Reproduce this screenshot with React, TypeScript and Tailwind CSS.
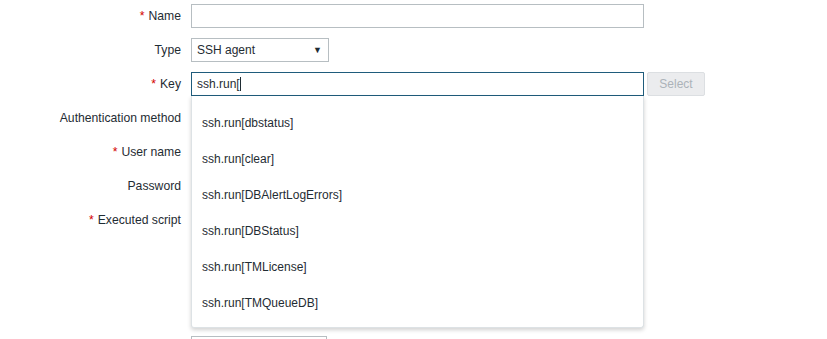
import React from "react";

const suggestions = [
  "ssh.run[dbstatus]",
  "ssh.run[clear]",
  "ssh.run[DBAlertLogErrors]",
  "ssh.run[DBStatus]",
  "ssh.run[TMLicense]",
  "ssh.run[TMQueueDB]",
];

const Label = ({ text, required }: { text: string; required?: boolean }) => (
  <div className="h-[24px] flex items-center justify-end whitespace-nowrap text-[12.2px]">
    {required && <span className="text-[#d40000] mr-[4px]">*</span>}
    {text}
  </div>
);

const App = () => {
  return (
    <div
      className="relative w-[827px] h-[339px] overflow-hidden bg-white text-[12px] text-[#1f2c33]"
      style={{ fontFamily: '"Liberation Sans", Arial, sans-serif' }}
    >
      <div className="grid grid-cols-[181px_auto] gap-x-[10px] gap-y-[10px] pt-[4px]">
        <Label text="Name" required />
        <div className="w-[453px] h-[24px] border border-[#b7bec2] bg-white" />

        <Label text="Type" />
        <div className="w-[138px] h-[24px] border border-[#b7bec2] bg-white flex items-center justify-between pl-[5px] pr-[6px]">
          <span>SSH agent</span>
          <span className="text-[9px] leading-none">▼</span>
        </div>

        <Label text="Key" required />
        <div className="flex gap-[3px]">
          <div className="w-[453px] h-[24px] border border-[#1f5c7c] bg-white flex items-center pl-[5px]">
            ssh.run[<span className="w-px h-[14px] bg-[#1f2c33]" />
          </div>
          <div className="w-[58px] h-[24px] border border-[#dcdfe2] bg-[#ebecee] rounded-[2px] flex items-center justify-center text-[#acb3b9]">
            Select
          </div>
        </div>

        <Label text="Authentication method" />
        <div className="h-[24px]" />

        <Label text="User name" required />
        <div className="h-[24px]" />

        <Label text="Password" />
        <div className="h-[24px]" />

        <div className="h-[118px] flex justify-end whitespace-nowrap pt-[3px] text-[12.2px]">
          <span className="text-[#d40000] mr-[4px]">*</span>Executed script
        </div>
        <div className="h-[118px] w-[453px] border border-[#b7bec2]" />

        <div />
        <div className="w-[136px] h-[24px] border border-[#b7bec2]" />
      </div>

      <div className="absolute left-[191px] top-[96px] w-[453px] h-[232px] bg-white border border-[#dde2e5] border-t-0 rounded-b-[3px] shadow-[0_2px_4px_rgba(0,0,0,0.18)] pt-[9px] pb-[7px]">
        {suggestions.map((s) => (
          <div key={s} className="h-[36px] flex items-center pl-[10px]">
            {s}
          </div>
        ))}
      </div>
    </div>
  );
};

export default App;
